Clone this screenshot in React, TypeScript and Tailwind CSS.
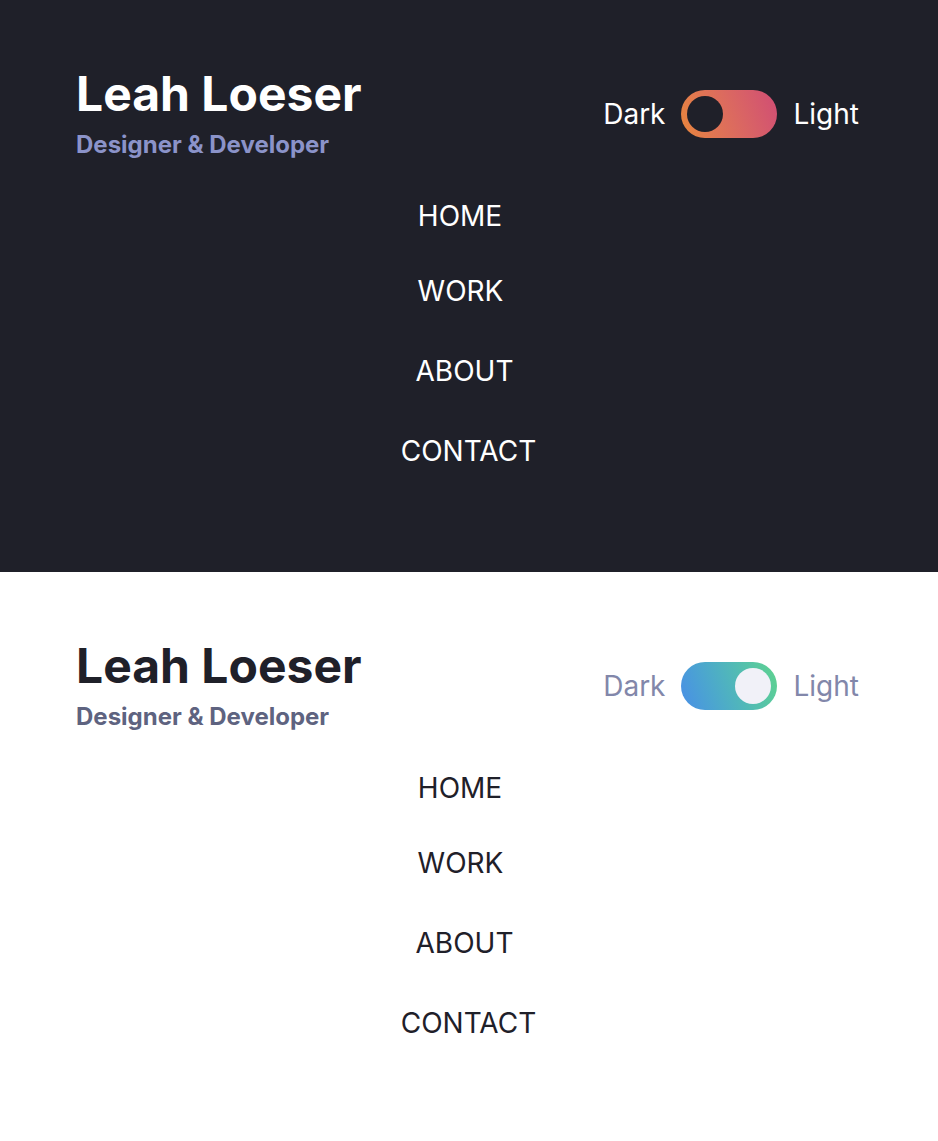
import React from "react"

type Mode = "dark" | "light"

const links = [
  { label: "HOME", shift: "pr-[18px]", space: "mt-0" },
  { label: "WORK", shift: "pr-[17px]", space: "mt-[47px]" },
  { label: "ABOUT", shift: "pr-[9px]", space: "mt-[52px]" },
  { label: "CONTACT", shift: "pr-[1px]", space: "mt-[52px]" },
]

function Toggle({ mode }: { mode: Mode }) {
  const dark = mode === "dark"
  return (
    <div
      className={
        "flex h-12 w-24 items-center rounded-full px-[6px] bg-linear-70 " +
        (dark
          ? "justify-start from-[#e8863a] to-[#d04c74]"
          : "justify-end from-[#4a8ee6] to-[#5fd38c]")
      }
    >
      <span className={"block h-9 w-9 rounded-full " + (dark ? "bg-[#1f2029]" : "bg-[#f1f1f8]")} />
    </div>
  )
}

function Panel({ mode }: { mode: Mode }) {
  const dark = mode === "dark"
  return (
    <section className={"pt-[70px] " + (dark ? "h-[572px] bg-[#1f2029]" : "h-[569px] bg-white")}>
      <header className="flex items-start justify-between pl-[76px] pr-[79px]">
        <div>
          <h1 className={"text-[48px] font-bold leading-[48px] " + (dark ? "text-white" : "text-[#1f2029]")}>
            Leah Loeser
          </h1>
          <p className={"mt-[13px] text-[24px] font-bold leading-[28px] " + (dark ? "text-[#8b93c9]" : "text-[#5e6380]")}>
            Designer &amp; Developer
          </p>
        </div>
        <div className={"mt-[20px] flex items-center gap-4 text-[28px] " + (dark ? "text-white" : "text-[#8287aa]")}>
          <span>Dark</span>
          <Toggle mode={mode} />
          <span>Light</span>
        </div>
      </header>
      <nav className="mt-[43px]">
        <ul className="flex flex-col items-center">
          {links.map((l) => (
            <li
              key={l.label}
              className={"text-[28px] leading-[28px] " + l.space + " " + l.shift}
            >
              <a href="#" className={dark ? "text-white" : "text-[#1f2029]"}>
                {l.label}
              </a>
            </li>
          ))}
        </ul>
      </nav>
    </section>
  )
}

export default function App() {
  return (
    <div className="w-[938px] font-['Inter',sans-serif]">
      <Panel mode="dark" />
      <Panel mode="light" />
    </div>
  )
}
